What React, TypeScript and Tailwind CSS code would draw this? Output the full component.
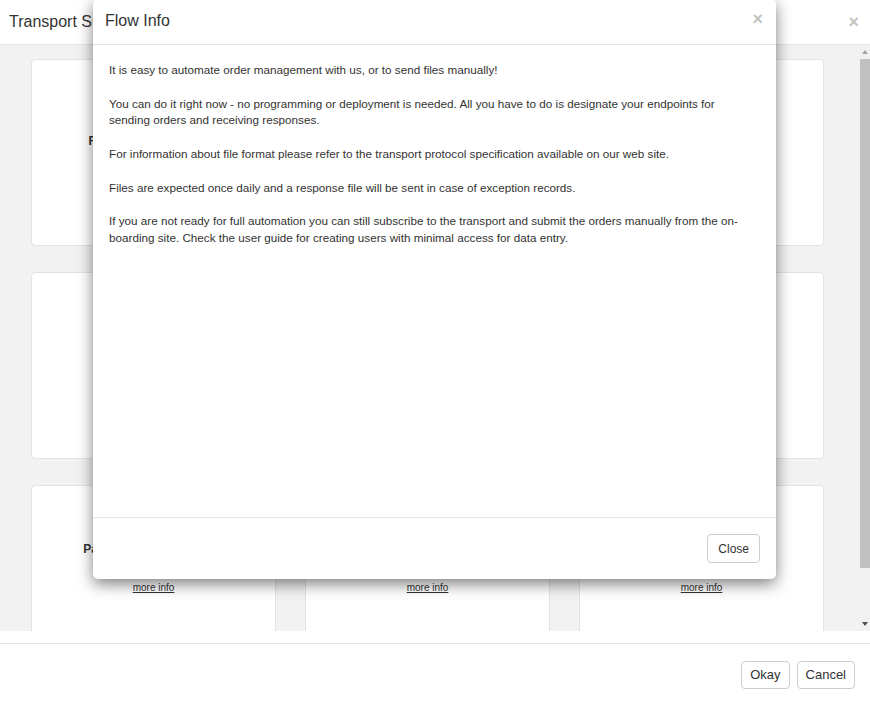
import React from 'react';

const font = { fontFamily: '"Liberation Sans", Arial, sans-serif' };

interface Flow {
  title: string;
  top: string;
}

const flows: Flow[] = [
  { title: 'File Upload Transports', top: 'pt-[74px]' },
  { title: 'SFTP Order Transport', top: 'pt-[74px]' },
  { title: 'AS2 Order Transport', top: 'pt-[74px]' },
  { title: 'Web Service', top: 'pt-[74px]' },
  { title: 'E-mail Orders', top: 'pt-[74px]' },
  { title: 'HTTPS Transport', top: 'pt-[74px]' },
  { title: 'Partner Manual Ordering', top: 'pt-[56px]' },
  { title: 'Partner File Exchange', top: 'pt-[56px]' },
  { title: 'Batch Upload Transport', top: 'pt-[56px]' },
];

const FlowCard: React.FC<{ flow: Flow }> = ({ flow }) => (
  <div className={`h-[187px] bg-white border border-[#e3e3e3] rounded-[4px] flex flex-col items-center ${flow.top}`}>
    <div className="text-[12px] font-bold text-[#333] leading-[14px]">{flow.title}</div>
    <a href="#" className="mt-[26px] text-[10px] text-[#333] underline leading-[12px]">more info</a>
  </div>
);

export default function App() {
  return (
    <div className="relative w-[870px] h-[703px] bg-white overflow-hidden text-[#333]" style={font}>
      {/* dialog header */}
      <div className="h-[45px] border-b border-[#e5e5e5] flex items-center justify-between pl-[9px] pr-[11px]">
        <h4 className="text-[16px] leading-[20px]">Transport Subscription</h4>
        <span className="text-[18px] font-bold text-[#c4c4c4] leading-none">×</span>
      </div>

      {/* scrollable body */}
      <div className="h-[586px] flex bg-[#f2f2f2]">
        <div className="flex-1 overflow-hidden pl-[31px] pr-[36px] pt-[14px]">
          <div className="grid grid-cols-3 gap-x-[29px] gap-y-[26px]">
            {flows.map((f) => (
              <FlowCard key={f.title} flow={f} />
            ))}
          </div>
        </div>
        <div className="w-[10px] bg-[#f1f1f1] flex flex-col items-center">
          <div className="h-[14px] flex items-center justify-center">
            <svg width="6" height="4" viewBox="0 0 6 4"><path d="M0 4 L3 0 L6 4 Z" fill="#a3a3a3" /></svg>
          </div>
          <div className="w-full h-[509px] bg-[#c1c1c1]" />
          <div className="flex-1" />
          <div className="h-[14px] flex items-center justify-center">
            <svg width="6" height="4" viewBox="0 0 6 4"><path d="M0 0 L6 0 L3 4 Z" fill="#505050" /></svg>
          </div>
        </div>
      </div>

      {/* dialog footer */}
      <div className="mt-[12px] border-t border-[#e5e5e5] h-[60px] flex items-center justify-end gap-[7px] pr-[15px]">
        <button className="h-[28px] px-[8px] border border-[#ccc] rounded-[4px] bg-white text-[13px] text-[#333] mt-[2px]">Okay</button>
        <button className="h-[28px] px-[8px] border border-[#ccc] rounded-[4px] bg-white text-[13px] text-[#333] mt-[2px]">Cancel</button>
      </div>

      {/* Flow Info modal on top */}
      <div className="absolute left-[93px] top-[-1px] w-[683px] h-[580px] bg-white rounded-[5px] shadow-[0_5px_15px_rgba(0,0,0,0.5)] flex flex-col">
        <div className="h-[46px] border-b border-[#e5e5e5] flex items-center justify-between pl-[12px] pr-[13px] shrink-0">
          <h4 className="text-[16px] leading-[20px] text-[#333] mb-[2px]">Flow Info</h4>
          <span className="text-[18px] font-bold text-[#c4c4c4] leading-none mb-[5px]">×</span>
        </div>
        <div className="flex-1 pl-[16px] pr-[26px] pt-[17px] text-[11.7px] leading-[16.8px] text-[#333]">
          <p>It is easy to automate order management with us, or to send files manually!</p>
          <br />
          <p>You can do it right now - no programming or deployment is needed. All you have to do is designate your endpoints for sending orders and receiving responses.</p>
          <br />
          <p>For information about file format please refer to the transport protocol specification available on our web site.</p>
          <br />
          <p>Files are expected once daily and a response file will be sent in case of exception records.</p>
          <br />
          <p>If you are not ready for full automation you can still subscribe to the transport and submit the orders manually from the on-boarding site. Check the user guide for creating users with minimal access for data entry.</p>
        </div>
        <div className="h-[62px] border-t border-[#e5e5e5] flex items-center justify-end pr-[16px] shrink-0">
          <button className="h-[29px] px-[10px] border border-[#ccc] rounded-[4px] bg-white text-[12px] text-[#333]">Close</button>
        </div>
      </div>
    </div>
  );
}
